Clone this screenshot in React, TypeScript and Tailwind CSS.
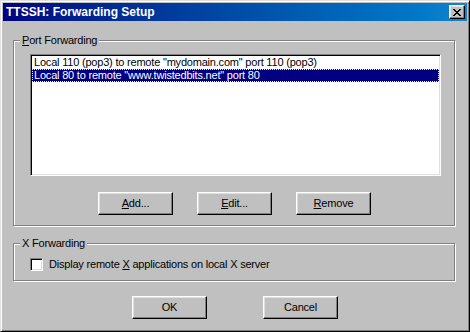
import React from "react";

const font = "font-['Liberation_Sans',Arial,sans-serif]";

const raised =
  "border border-t-white border-l-white border-r-black border-b-black shadow-[inset_-1px_-1px_0_#808080,inset_1px_1px_0_#dfdfdf] bg-[#c0c0c0]";

const Btn = ({ children }: { children: React.ReactNode }) => (
  <button
    className={`${raised} flex h-[23px] w-[75px] items-center justify-center text-[11px] tracking-[-0.2px] text-black`}
  >
    {children}
  </button>
);

const GroupBox = ({
  label,
  className = "",
  children,
}: {
  label: React.ReactNode;
  className?: string;
  children: React.ReactNode;
}) => (
  <fieldset
    className={`border border-[#808080] shadow-[1px_1px_0_white,inset_1px_1px_0_white] ${className}`}
  >
    <legend className="ml-[6px] bg-[#c0c0c0] px-[2px] text-[11px] leading-[13px] tracking-[-0.2px]">
      {label}
    </legend>
    {children}
  </fieldset>
);

export default function App() {
  const rows = [
    'Local 110 (pop3) to remote "mydomain.com" port 110 (pop3)',
    'Local 80 to remote "www.twistedbits.net" port 80',
  ];

  return (
    <div
      className={`${font} flex h-[332px] w-[470px] flex-col border border-t-[#dfdfdf] border-l-[#dfdfdf] border-r-black border-b-black bg-[#c0c0c0] p-[2px] text-black shadow-[inset_1px_1px_0_white,inset_-1px_-1px_0_#808080]`}
    >
      {/* title bar */}
      <div className="flex h-[18px] items-center justify-between bg-gradient-to-r from-[#000080] to-[#1084d0] pl-[3px] pr-[2px]">
        <span className="text-[12px] font-bold text-white">TTSSH: Forwarding Setup</span>
        <button className={`${raised} flex h-[14px] w-[16px] items-center justify-center`}>
          <svg width="8" height="7" viewBox="0 0 8 7">
            <path d="M0 0h2v1h1v1h2V1h1V0h2v1H7v1H6v1H5v1h1v1h1v1h1v1H6V6H5V5H3v1H2v1H0V6h1V5h1V4h1V3H2V2H1V1H0z" fill="black" />
          </svg>
        </button>
      </div>

      <div className="flex flex-col px-[10px]">
        <GroupBox
          className="mt-[13px] w-[442px] pb-[10px]"
          label={
            <>
              <span className="underline">P</span>ort Forwarding
            </>
          }
        >
          <div className="ml-[16px] mt-[7px] h-[122px] w-[411px] border border-t-[#808080] border-l-[#808080] border-r-white border-b-white bg-white shadow-[inset_1px_1px_0_black,inset_-1px_-1px_0_#dfdfdf] p-[1px]">
            {rows.map((r, i) => (
              <div
                key={i}
                className={`h-[13px] whitespace-nowrap pl-[2px] text-[11px] leading-[13px] tracking-[-0.2px] ${
                  i === 1 ? "bg-[#000080] text-white outline outline-1 -outline-offset-1 outline-dotted outline-[#ffff80]" : ""
                }`}
              >
                {r}
              </div>
            ))}
          </div>
          <div className="ml-[84px] mt-[16px] flex gap-[24px]">
            <Btn>
              <span className="underline">A</span>dd...
            </Btn>
            <Btn>
              <span className="underline">E</span>dit...
            </Btn>
            <Btn>
              <span className="underline">R</span>emove
            </Btn>
          </div>
        </GroupBox>

        <GroupBox className="mt-[11px] w-[442px] pb-[7px]" label="X Forwarding">
          <label className="ml-[16px] mt-[6px] flex items-center gap-[6px] text-[11px] tracking-[-0.2px]">
            <span className="h-[13px] w-[13px] border border-t-[#808080] border-l-[#808080] border-r-white border-b-white bg-white shadow-[inset_1px_1px_0_black,inset_-1px_-1px_0_#dfdfdf]" />
            <span>
              Display remote <span className="underline">X</span> applications on local X server
            </span>
          </label>
        </GroupBox>

        <div className="mt-[15px] flex justify-center gap-[56px]">
          <Btn>OK</Btn>
          <Btn>Cancel</Btn>
        </div>
      </div>
    </div>
  );
}
